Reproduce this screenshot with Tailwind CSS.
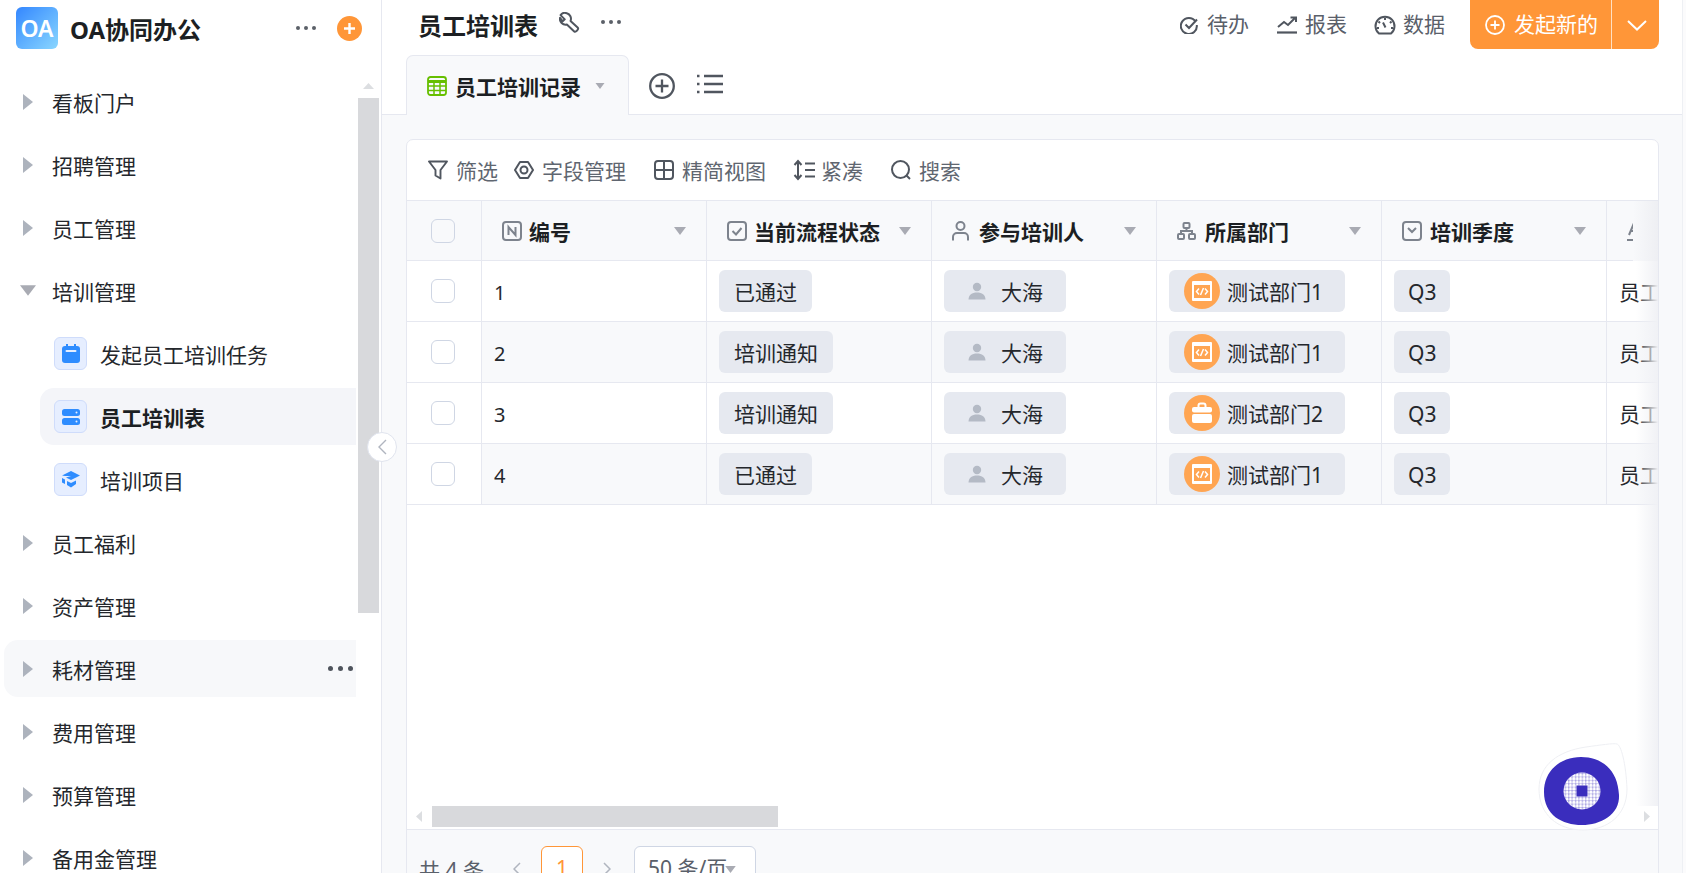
<!DOCTYPE html>
<html lang="zh-CN">

<head>
    <meta charset="UTF-8">
    <meta name="viewport" content="width=device-width, initial-scale=1.0">
    <title>OA协同办公 - 员工培训表</title>
    <script src="https://cdn.jsdelivr.net/npm/@tailwindcss/browser@4"></script>
</head>

<body class="h-screen overflow-hidden bg-white text-[21px] text-[#24272c] font-['Noto_Sans','Noto_Sans_CJK_SC',sans-serif]">
    <!-- shared icons -->
    <svg class="hidden">
        <symbol id="tri-right" viewBox="0 0 10 16"><path d="M0 0L10 8L0 16Z" fill="#adb3bd"/></symbol>
        <symbol id="tri-down" viewBox="0 0 12 8"><path d="M0 0H12L6 8Z" fill="#a9abb3"/></symbol>
        <symbol id="person" viewBox="0 0 18 18"><circle cx="9" cy="5" r="4.200" fill="#b4bac5"/><path d="M0.500 17.500c0-4.500 3.500-7 8.500-7s8.500 2.500 8.500 7Z" fill="#b4bac5"/></symbol>
        <symbol id="dept-code" viewBox="0 0 36 36">
            <circle cx="18" cy="18" r="18" fill="#ffa552"/>
            <rect x="8" y="8" width="20" height="20" rx="1" fill="#fff"/>
            <rect x="10" y="12" width="16" height="13" fill="#ffa552"/>
            <path d="M15 15.500L12.500 18.500L15 21.500M21 15.500L23.500 18.500L21 21.500M19.500 15L16.500 22" fill="none" stroke="#fff" stroke-width="1.500"/>
        </symbol>
        <symbol id="dept-bag" viewBox="0 0 36 36">
            <circle cx="18" cy="18" r="18" fill="#ffa552"/>
            <path d="M14.500 12v-1.500a2 2 0 0 1 2-2h3a2 2 0 0 1 2 2V12" fill="none" stroke="#fff" stroke-width="2"/>
            <rect x="8" y="12" width="20" height="5.500" rx="2" fill="#fff"/>
            <rect x="8" y="19" width="20" height="9" rx="2" fill="#fff"/>
        </symbol>
    </svg>

    <div class="flex h-full">
        <!-- Sidebar -->
        <aside class="relative w-[382px] shrink-0 border-r border-[#e6e8f0] flex flex-col h-full">
            <div class="h-[73px] shrink-0 flex items-start pl-4 pt-[7px]">
                <div class="w-[42px] h-[42px] rounded-[6px] bg-linear-to-br from-[#3486ff] to-[#8ad6ff] flex items-center justify-center text-white text-[23px] font-semibold">OA</div>
                <div class="ml-3 mt-[5px] text-[24px] font-bold text-[#1c1f23] w-[226px]">OA协同办公</div>
                <svg class="mt-[19px] w-[20px] h-[4px]" viewBox="0 0 20 4" fill="#5b6068"><circle cx="2" cy="2" r="2"/><circle cx="10" cy="2" r="2"/><circle cx="18" cy="2" r="2"/></svg>
                <svg class="ml-[21px] mt-[9px] w-[25px] h-[25px]" viewBox="0 0 25 25"><circle cx="12.500" cy="12.500" r="12.500" fill="#ff9638"/><path d="M12.500 7v11M7 12.500h11" stroke="#fff" stroke-width="2.400"/></svg>
            </div>
            <div class="flex-1 min-h-0 flex">
                <!-- Menu -->
                <nav class="w-[356px] pl-1 shrink-0 flex flex-col gap-[6px] overflow-hidden">
                    <div class="h-[57px] shrink-0 flex items-center pl-[19px]"><svg class="w-[10px] h-[16px]"><use href="#tri-right"/></svg><span class="ml-[19px] pt-[5px]">看板门户</span></div>
                    <div class="h-[57px] shrink-0 flex items-center pl-[19px]"><svg class="w-[10px] h-[16px]"><use href="#tri-right"/></svg><span class="ml-[19px] pt-[5px]">招聘管理</span></div>
                    <div class="h-[57px] shrink-0 flex items-center pl-[19px]"><svg class="w-[10px] h-[16px]"><use href="#tri-right"/></svg><span class="ml-[19px] pt-[5px]">员工管理</span></div>
                    <div class="h-[57px] shrink-0 flex items-center pl-[16px]"><svg class="w-[16px] h-[11px]"><use href="#tri-down"/></svg><span class="ml-[16px] pt-[5px]">培训管理</span></div>

                    <div class="h-[57px] shrink-0 flex items-center pl-[50px]">
                        <div class="w-[33px] h-[33px] rounded-[6px] bg-[#e6eeff] border border-[#cfdcfb] flex items-center justify-center">
                            <svg class="w-[18px] h-[19px]" viewBox="0 0 18 19"><path d="M4 0h2v3H4zM12 0h2v3h-2z" fill="#2e8cff"/><rect y="2" width="18" height="17" rx="3" fill="#2e8cff"/><rect x="3.500" y="6" width="11" height="2" rx="1" fill="#e6eeff"/></svg>
                        </div>
                        <span class="ml-[13px] pt-[5px]">发起员工培训任务</span>
                    </div>
                    <div class="h-[57px] shrink-0 flex items-center ml-9 pl-[14px] rounded-l-[14px] bg-[#f4f5f9]">
                        <div class="w-[33px] h-[33px] rounded-[6px] bg-[#e6eeff] border border-[#cfdcfb] flex items-center justify-center">
                            <svg class="w-[18px] h-[16px]" viewBox="0 0 18 16"><rect width="18" height="7" rx="2.500" fill="#2e8cff"/><rect y="9" width="18" height="7" rx="2.500" fill="#2e8cff"/><circle cx="14.500" cy="3.500" r="1" fill="#e6eeff"/><circle cx="14.500" cy="12.500" r="1" fill="#e6eeff"/></svg>
                        </div>
                        <span class="ml-[13px] pt-[5px] font-bold text-[#1c1f23]">员工培训表</span>
                    </div>
                    <div class="h-[57px] shrink-0 flex items-center pl-[50px]">
                        <div class="w-[33px] h-[33px] rounded-[6px] bg-[#e6eeff] border border-[#cfdcfb] flex items-center justify-center">
                            <svg class="w-[18px] h-[17px]" viewBox="0 0 18 17"><path d="M9 0L18 4.500L9 9L4 6.500L9 5L3 5L0 4.500Z" fill="#2e8cff"/><path d="M0 7L3 8.500V13L0 11.500ZM5 10L9 12L14 9.500V13L9 16.500L5 14Z" fill="#2e8cff"/></svg>
                        </div>
                        <span class="ml-[13px] pt-[5px]">培训项目</span>
                    </div>

                    <div class="h-[57px] shrink-0 flex items-center pl-[19px]"><svg class="w-[10px] h-[16px]"><use href="#tri-right"/></svg><span class="ml-[19px] pt-[5px]">员工福利</span></div>
                    <div class="h-[57px] shrink-0 flex items-center pl-[19px]"><svg class="w-[10px] h-[16px]"><use href="#tri-right"/></svg><span class="ml-[19px] pt-[5px]">资产管理</span></div>
                    <div class="h-[57px] shrink-0 flex items-center pl-[19px] rounded-l-[14px] bg-[#f7f8fa]">
                        <svg class="w-[10px] h-[16px]"><use href="#tri-right"/></svg><span class="ml-[19px] pt-[5px] flex-1">耗材管理</span>
                        <svg class="mr-[3px] w-[25px] h-[5px]" viewBox="0 0 25 5" fill="#4f545c"><circle cx="2.500" cy="2.500" r="2.500"/><circle cx="12.500" cy="2.500" r="2.500"/><circle cx="22.500" cy="2.500" r="2.500"/></svg>
                    </div>
                    <div class="h-[57px] shrink-0 flex items-center pl-[19px]"><svg class="w-[10px] h-[16px]"><use href="#tri-right"/></svg><span class="ml-[19px] pt-[5px]">费用管理</span></div>
                    <div class="h-[57px] shrink-0 flex items-center pl-[19px]"><svg class="w-[10px] h-[16px]"><use href="#tri-right"/></svg><span class="ml-[19px] pt-[5px]">预算管理</span></div>
                    <div class="h-[57px] shrink-0 flex items-center pl-[19px]"><svg class="w-[10px] h-[16px]"><use href="#tri-right"/></svg><span class="ml-[19px] pt-[5px]">备用金管理</span></div>
                </nav>
                <!-- Menu scrollbar -->
                <div class="w-[21px] ml-[2px] shrink-0 flex flex-col items-center">
                    <svg class="mt-[10px] w-[11px] h-[6px]" viewBox="0 0 11 6"><path d="M0 6L5.500 0L11 6Z" fill="#dcdee1"/></svg>
                    <div class="mt-[9px] w-full h-[515px] bg-[#d8d9dc]"></div>
                </div>
            </div>
            <!-- Collapse handle -->
            <button class="absolute left-[367px] top-[432px] w-[30px] h-[30px] rounded-full bg-white border border-[#e0e4ee] flex items-center justify-center">
                <svg class="w-[9px] h-[16px]" viewBox="0 0 9 16" fill="none" stroke="#b0b5bf" stroke-width="1.400"><path d="M8 1L1 8L8 15"/></svg>
            </button>
        </aside>

        <!-- Main -->
        <main class="w-[1301px] shrink-0 h-full border-r border-[#eef0f4] flex flex-col">
            <!-- Title bar -->
            <div class="h-[55px] shrink-0 flex items-start">
                <h1 class="ml-[36px] mt-[8px] text-[24px] font-bold text-[#1c1f23]">员工培训表</h1>
                <svg class="ml-[21px] mt-[12px] w-[21px] h-[21px]" viewBox="0 0 20 20" fill="none" stroke="#50565f" stroke-width="1.900" stroke-linejoin="round"><path d="M7.500 1.200a5 5 0 0 0-6 1.800L5.500 7l-2 1.800L1 5.500a5.500 5.500 0 0 0 6.500 6.500l7 6.500c1.500 1.200 4.500-2 3.500-3.500l-7-6.500a5.500 5.500 0 0 0-3.500-7.300Z"/></svg>
                <svg class="ml-[21px] mt-[20px] w-[20px] h-[4px]" viewBox="0 0 20 4" fill="#5b6068"><circle cx="2" cy="2" r="2"/><circle cx="10" cy="2" r="2"/><circle cx="18" cy="2" r="2"/></svg>

                <div class="ml-auto flex items-center h-[49px] text-[#5a606a]">
                    <svg class="w-[18px] h-[18px]" viewBox="0 0 18 18" fill="none" stroke="#50565f" stroke-width="2"><path d="M15.500 5.500A8 8 0 1 0 16.800 9"/><path d="M5.500 8.500L9 12L17 3.500"/></svg>
                    <span class="ml-[9px]">待办</span>
                    <svg class="ml-[28px] w-[20px] h-[18px]" viewBox="0 0 20 18" fill="none" stroke="#50565f" stroke-width="2"><path d="M1 11L7 6L11 9L18 2M13.500 1.500H19V6"/><path d="M0 16.500H20" stroke-width="2.200"/></svg>
                    <span class="ml-[8px]">报表</span>
                    <svg class="ml-[27px] w-[22px] h-[20px]" viewBox="0 0 22 20" fill="none" stroke="#50565f" stroke-width="2"><path d="M5 18.500A9.500 9.500 0 1 1 17 18.500Z" stroke-linejoin="round"/><path d="M11 3v2M4.500 6.500L6 8M17.500 6.500L16 8M3 13h2M19 13h-2M9 7.500L11.500 12.500" /></svg>
                    <span class="ml-[7px]">数据</span>
                    <div class="ml-[25px] w-[189px] h-[49px] rounded-b-[8px] bg-[#ff9638] flex items-center text-white">
                        <svg class="ml-[15px] w-[20px] h-[20px]" viewBox="0 0 20 20" fill="none" stroke="#fff" stroke-width="1.800"><circle cx="10" cy="10" r="9"/><path d="M10 5.500v9M5.500 10h9"/></svg>
                        <span class="ml-[9px] w-[97px]">发起新的</span>
                        <div class="w-px h-full bg-white/70"></div>
                        <svg class="ml-[14px] w-[22px] h-[12px]" viewBox="0 0 22 12" fill="none" stroke="#fff" stroke-width="2"><path d="M2 2L11 10.500L20 2"/></svg>
                    </div>
                </div>
                <div class="w-[23px] shrink-0"></div>
            </div>

            <!-- View tabs -->
            <div class="h-[60px] shrink-0 border-b border-[#e6e8f0] flex items-start">
                <div class="ml-6 w-[223px] h-[60px] rounded-t-[7px] border border-b-0 border-[#e6e8f0] bg-[#f8f9fb] flex items-center">
                    <svg class="ml-[20px] w-[20px] h-[20px]" viewBox="0 0 20 20" fill="none" stroke="#66bf00" stroke-width="1.800"><rect x="1" y="1" width="18" height="18" rx="2.500"/><path d="M1 5.500H19" stroke-width="3"/><path d="M1 10H19M1 14.500H19M7 6V19M13 6V19" stroke-width="1.500"/></svg>
                    <span class="ml-[8px] pt-[4px] font-bold text-[#1c1f23]">员工培训记录</span>
                    <svg class="ml-[14px] w-[10px] h-[6px]"><use href="#tri-down"/></svg>
                </div>
                <svg class="ml-[20px] mt-[18px] w-[26px] h-[26px]" viewBox="0 0 26 26" fill="none" stroke="#50565f" stroke-width="2.300"><circle cx="13" cy="13" r="11.800"/><path d="M13 6.500v13M6.500 13h13"/></svg>
                <svg class="ml-[22px] mt-[19px] w-[26px] h-[20px]" viewBox="0 0 26 20" fill="none" stroke="#50565f" stroke-width="2.500"><path d="M7 2H26M7 10H26M7 18H26"/><path d="M0 2h2.500M0 10h2.500M0 18h2.500"/></svg>
            </div>

            <!-- Content -->
            <div class="flex-1 min-h-0 overflow-hidden bg-[#f8f9fb] pt-6 pl-6 pr-[23px]">
                <div class="relative h-[760px] rounded-t-[7px] border border-[#e6e8f0] bg-white flex flex-col">
                    <!-- Toolbar -->
                    <div class="h-[61px] shrink-0 border-b border-[#e6e8f0] flex items-center text-[#5f6670]">
                        <svg class="ml-[21px] w-[20px] h-[20px]" viewBox="0 0 20 20" fill="none" stroke="#50565f" stroke-width="1.900" stroke-linejoin="round"><path d="M1 1.500H19L12.500 10V18.500L7.500 15.500V10Z"/></svg>
                        <span class="ml-[8px] pt-[4px]">筛选</span>
                        <svg class="ml-[16px] w-[20px] h-[20px]" viewBox="0 0 20 20" fill="none" stroke="#50565f" stroke-width="2" stroke-linejoin="round"><path d="M6 2H14L19 10L14 18H6L1 10Z"/><circle cx="10" cy="10" r="3.500"/></svg>
                        <span class="ml-[8px] pt-[4px]">字段管理</span>
                        <svg class="ml-[28px] w-[20px] h-[20px]" viewBox="0 0 20 20" fill="none" stroke="#50565f" stroke-width="2"><rect x="1" y="1" width="18" height="18" rx="3"/><path d="M10 1V19M1 10H19"/></svg>
                        <span class="ml-[8px] pt-[4px]">精简视图</span>
                        <svg class="ml-[27px] w-[22px] h-[22px]" viewBox="0 0 22 22" fill="none" stroke="#50565f" stroke-width="2"><path d="M5 2V20M1.500 6L5 2L8.500 6M1.500 16L5 20L8.500 16"/><path d="M12 4.500H22M12 11H22M12 17.500H22"/></svg>
                        <span class="ml-[6px] pt-[4px]">紧凑</span>
                        <svg class="ml-[28px] w-[20px] h-[20px]" viewBox="0 0 20 20" fill="none" stroke="#50565f" stroke-width="2"><circle cx="9.500" cy="9.500" r="8.500"/><path d="M15.500 15.500L19 19"/></svg>
                        <span class="ml-[8px] pt-[4px]">搜索</span>
                    </div>

                    <!-- Table -->
                    <div class="relative h-[605px] shrink-0 overflow-hidden">
                        <!-- Head -->
                        <div class="flex h-[60px] bg-[#f8f9fb] border-b border-[#e6e8f0] font-bold text-[#1c1f23]">
                            <div class="w-[75px] shrink-0 border-r border-[#e6e8f0] flex items-center justify-center pr-[3px]"><div class="w-[24px] h-[24px] rounded-[6px] border border-[#cfd6e4] bg-[#f8f9fb]"></div></div>
                            <div class="w-[225px] shrink-0 border-r border-[#e6e8f0] flex items-center pl-[20px] pr-[20px]">
                                <svg class="w-[20px] h-[20px]" viewBox="0 0 20 20" fill="none" stroke="#7d838d" stroke-width="2"><rect x="1" y="1" width="18" height="18" rx="3"/><path d="M6.500 14V6L13.500 14V6"/></svg>
                                <span class="ml-[7px] pt-[4px] flex-1">编号</span><svg class="w-[12px] h-[8px]"><use href="#tri-down"/></svg>
                            </div>
                            <div class="w-[225px] shrink-0 border-r border-[#e6e8f0] flex items-center pl-[20px] pr-[20px]">
                                <svg class="w-[20px] h-[20px]" viewBox="0 0 20 20" fill="none" stroke="#7d838d" stroke-width="2"><rect x="1" y="1" width="18" height="18" rx="3"/><path d="M5.500 10L9 13.500L14.500 7"/></svg>
                                <span class="ml-[7px] pt-[4px] flex-1">当前流程状态</span><svg class="w-[12px] h-[8px]"><use href="#tri-down"/></svg>
                            </div>
                            <div class="w-[225px] shrink-0 border-r border-[#e6e8f0] flex items-center pl-[20px] pr-[20px]">
                                <svg class="w-[17px] h-[20px]" viewBox="0 0 17 20" fill="none" stroke="#7d838d" stroke-width="2"><circle cx="8.500" cy="5" r="4"/><path d="M1 19.500V16a4 4 0 0 1 4-4h7a4 4 0 0 1 4 4v3.500"/></svg>
                                <span class="ml-[10px] pt-[4px] flex-1">参与培训人</span><svg class="w-[12px] h-[8px]"><use href="#tri-down"/></svg>
                            </div>
                            <div class="w-[225px] shrink-0 border-r border-[#e6e8f0] flex items-center pl-[20px] pr-[20px]">
                                <svg class="w-[19px] h-[18px]" viewBox="0 0 19 18" fill="none" stroke="#7d838d" stroke-width="2"><rect x="6.500" y="1" width="6" height="5" rx="1"/><rect x="1" y="12" width="6" height="5" rx="1"/><rect x="12" y="12" width="6" height="5" rx="1"/><path d="M9.500 6V9M4 12V9H15V12"/></svg>
                                <span class="ml-[9px] pt-[4px] flex-1">所属部门</span><svg class="w-[12px] h-[8px]"><use href="#tri-down"/></svg>
                            </div>
                            <div class="w-[225px] shrink-0 border-r border-[#e6e8f0] flex items-center pl-[20px] pr-[20px]">
                                <svg class="w-[20px] h-[20px]" viewBox="0 0 20 20" fill="none" stroke="#7d838d" stroke-width="2"><rect x="1" y="1" width="18" height="18" rx="3"/><path d="M6 7L10 11L14 7"/></svg>
                                <span class="ml-[8px] pt-[4px] flex-1">培训季度</span><svg class="w-[12px] h-[8px]"><use href="#tri-down"/></svg>
                            </div>
                            <div class="w-[225px] shrink-0 flex items-center pl-[20px]">
                                <svg class="w-[20px] h-[20px]" viewBox="0 0 20 20" fill="none" stroke="#7d838d" stroke-width="2"><path d="M2 14L7 2L12 14M4 10H10M0 19H20"/></svg>
                            </div>
                        </div>

                        <!-- Row 1 -->
                        <div class="flex h-[61px] bg-white border-b border-[#e6e8f0]">
                            <div class="w-[75px] shrink-0 border-r border-[#e6e8f0] flex items-center justify-center pr-[3px]"><div class="w-[24px] h-[24px] rounded-[6px] border border-[#cfd6e4] bg-white"></div></div>
                            <div class="w-[225px] shrink-0 border-r border-[#e6e8f0] flex items-center pl-[12px] pt-[4px] text-[20px]">1</div>
                            <div class="w-[225px] shrink-0 border-r border-[#e6e8f0] flex items-center pl-[12px]"><span class="h-[42px] px-[15px] pt-[4px] rounded-[6px] bg-[#e6e9f0] flex items-center">已通过</span></div>
                            <div class="w-[225px] shrink-0 border-r border-[#e6e8f0] flex items-center pl-[12px]"><span class="h-[42px] w-[122px] rounded-[6px] bg-[#e6e9f0] flex items-center pl-[24px]"><svg class="w-[18px] h-[18px]"><use href="#person"/></svg><span class="ml-[15px] pt-[4px]">大海</span></span></div>
                            <div class="w-[225px] shrink-0 border-r border-[#e6e8f0] flex items-center pl-[12px]"><span class="h-[42px] w-[176px] rounded-[6px] bg-[#e6e9f0] flex items-center pl-[15px]"><svg class="w-[36px] h-[36px] shrink-0"><use href="#dept-code"/></svg><span class="ml-[7px] pt-[4px]">测试部门1</span></span></div>
                            <div class="w-[225px] shrink-0 border-r border-[#e6e8f0] flex items-center pl-[12px]"><span class="h-[42px] px-[14px] pt-[4px] rounded-[6px] bg-[#e6e9f0] flex items-center">Q3</span></div>
                            <div class="w-[225px] shrink-0 flex items-center pl-[12px] pt-[4px]">员工管理</div>
                        </div>
                        <!-- Row 2 -->
                        <div class="flex h-[61px] bg-[#f8f9fb] border-b border-[#e6e8f0]">
                            <div class="w-[75px] shrink-0 border-r border-[#e6e8f0] bg-white flex items-center justify-center pr-[3px]"><div class="w-[24px] h-[24px] rounded-[6px] border border-[#cfd6e4] bg-white"></div></div>
                            <div class="w-[225px] shrink-0 border-r border-[#e6e8f0] flex items-center pl-[12px] pt-[4px] text-[20px]">2</div>
                            <div class="w-[225px] shrink-0 border-r border-[#e6e8f0] flex items-center pl-[12px]"><span class="h-[42px] px-[15px] pt-[4px] rounded-[6px] bg-[#e6e9f0] flex items-center">培训通知</span></div>
                            <div class="w-[225px] shrink-0 border-r border-[#e6e8f0] flex items-center pl-[12px]"><span class="h-[42px] w-[122px] rounded-[6px] bg-[#e6e9f0] flex items-center pl-[24px]"><svg class="w-[18px] h-[18px]"><use href="#person"/></svg><span class="ml-[15px] pt-[4px]">大海</span></span></div>
                            <div class="w-[225px] shrink-0 border-r border-[#e6e8f0] flex items-center pl-[12px]"><span class="h-[42px] w-[176px] rounded-[6px] bg-[#e6e9f0] flex items-center pl-[15px]"><svg class="w-[36px] h-[36px] shrink-0"><use href="#dept-code"/></svg><span class="ml-[7px] pt-[4px]">测试部门1</span></span></div>
                            <div class="w-[225px] shrink-0 border-r border-[#e6e8f0] flex items-center pl-[12px]"><span class="h-[42px] px-[14px] pt-[4px] rounded-[6px] bg-[#e6e9f0] flex items-center">Q3</span></div>
                            <div class="w-[225px] shrink-0 flex items-center pl-[12px] pt-[4px]">员工管理</div>
                        </div>
                        <!-- Row 3 -->
                        <div class="flex h-[61px] bg-white border-b border-[#e6e8f0]">
                            <div class="w-[75px] shrink-0 border-r border-[#e6e8f0] flex items-center justify-center pr-[3px]"><div class="w-[24px] h-[24px] rounded-[6px] border border-[#cfd6e4] bg-white"></div></div>
                            <div class="w-[225px] shrink-0 border-r border-[#e6e8f0] flex items-center pl-[12px] pt-[4px] text-[20px]">3</div>
                            <div class="w-[225px] shrink-0 border-r border-[#e6e8f0] flex items-center pl-[12px]"><span class="h-[42px] px-[15px] pt-[4px] rounded-[6px] bg-[#e6e9f0] flex items-center">培训通知</span></div>
                            <div class="w-[225px] shrink-0 border-r border-[#e6e8f0] flex items-center pl-[12px]"><span class="h-[42px] w-[122px] rounded-[6px] bg-[#e6e9f0] flex items-center pl-[24px]"><svg class="w-[18px] h-[18px]"><use href="#person"/></svg><span class="ml-[15px] pt-[4px]">大海</span></span></div>
                            <div class="w-[225px] shrink-0 border-r border-[#e6e8f0] flex items-center pl-[12px]"><span class="h-[42px] w-[176px] rounded-[6px] bg-[#e6e9f0] flex items-center pl-[15px]"><svg class="w-[36px] h-[36px] shrink-0"><use href="#dept-bag"/></svg><span class="ml-[7px] pt-[4px]">测试部门2</span></span></div>
                            <div class="w-[225px] shrink-0 border-r border-[#e6e8f0] flex items-center pl-[12px]"><span class="h-[42px] px-[14px] pt-[4px] rounded-[6px] bg-[#e6e9f0] flex items-center">Q3</span></div>
                            <div class="w-[225px] shrink-0 flex items-center pl-[12px] pt-[4px]">员工管理</div>
                        </div>
                        <!-- Row 4 -->
                        <div class="flex h-[61px] bg-[#f8f9fb] border-b border-[#e6e8f0]">
                            <div class="w-[75px] shrink-0 border-r border-[#e6e8f0] bg-white flex items-center justify-center pr-[3px]"><div class="w-[24px] h-[24px] rounded-[6px] border border-[#cfd6e4] bg-white"></div></div>
                            <div class="w-[225px] shrink-0 border-r border-[#e6e8f0] flex items-center pl-[12px] pt-[4px] text-[20px]">4</div>
                            <div class="w-[225px] shrink-0 border-r border-[#e6e8f0] flex items-center pl-[12px]"><span class="h-[42px] px-[15px] pt-[4px] rounded-[6px] bg-[#e6e9f0] flex items-center">已通过</span></div>
                            <div class="w-[225px] shrink-0 border-r border-[#e6e8f0] flex items-center pl-[12px]"><span class="h-[42px] w-[122px] rounded-[6px] bg-[#e6e9f0] flex items-center pl-[24px]"><svg class="w-[18px] h-[18px]"><use href="#person"/></svg><span class="ml-[15px] pt-[4px]">大海</span></span></div>
                            <div class="w-[225px] shrink-0 border-r border-[#e6e8f0] flex items-center pl-[12px]"><span class="h-[42px] w-[176px] rounded-[6px] bg-[#e6e9f0] flex items-center pl-[15px]"><svg class="w-[36px] h-[36px] shrink-0"><use href="#dept-code"/></svg><span class="ml-[7px] pt-[4px]">测试部门1</span></span></div>
                            <div class="w-[225px] shrink-0 border-r border-[#e6e8f0] flex items-center pl-[12px]"><span class="h-[42px] px-[14px] pt-[4px] rounded-[6px] bg-[#e6e9f0] flex items-center">Q3</span></div>
                            <div class="w-[225px] shrink-0 flex items-center pl-[12px] pt-[4px]">员工管理</div>
                        </div>

                        <!-- Fixed column shadow -->
                        <div class="absolute right-0 top-0 w-[25px] h-[60px] bg-linear-to-r from-[#f8f9fb] to-[#eeeff3]"></div>
                        <div class="absolute right-0 top-[60px] bottom-0 w-[22px] bg-linear-to-r from-transparent to-[#f0f1f5]"></div>
                    </div>

                    <!-- Horizontal scrollbar -->
                    <div class="h-[23px] shrink-0 flex items-start relative">
                        <svg class="ml-[9px] mt-[5px] w-[6px] h-[11px]" viewBox="0 0 6 11"><path d="M6 0V11L0 5.500Z" fill="#dcdee1"/></svg>
                        <div class="ml-[10px] w-[346px] h-[21px] bg-[#d8d9dc]"></div>
                        <svg class="ml-auto mr-[8px] mt-[5px] w-[6px] h-[11px]" viewBox="0 0 6 11"><path d="M0 0V11L6 5.500Z" fill="#dcdee1"/></svg>
                    </div>

                    <!-- Pagination -->
                    <div class="flex-1 border-t border-[#e6e8f0] bg-[#f8f9fb] flex items-start pt-4 text-[#5a606a]">
                        <span class="ml-[12px] mt-[9px] w-[66px] whitespace-nowrap">共 4 条</span>
                        <svg class="ml-[28px] mt-[16px] w-[8px] h-[14px]" viewBox="0 0 8 14" fill="none" stroke="#b0b5bf" stroke-width="1.500"><path d="M7 1L1 7L7 13"/></svg>
                        <div class="ml-[20px] w-[42px] h-[42px] rounded-[6px] border border-[#ff9638] bg-white flex items-center justify-center text-[#ff9638] pt-[4px]">1</div>
                        <svg class="ml-[20px] mt-[16px] w-[8px] h-[14px]" viewBox="0 0 8 14" fill="none" stroke="#b0b5bf" stroke-width="1.500"><path d="M1 1L7 7L1 13"/></svg>
                        <div class="ml-[23px] w-[122px] h-[42px] rounded-[6px] border border-[#cfd6e4] bg-white flex items-center pl-[13px]">
                            <span class="whitespace-nowrap pt-[4px]">50 条/页</span><svg class="ml-[-3px] mt-[4px] w-[13px] h-[7px]"><use href="#tri-down"/></svg>
                        </div>
                    </div>
                </div>
            </div>
        </main>
        <div class="flex-1 bg-[#fbfbfc]"></div>
    </div>

    <!-- Floating assistant -->
    <svg class="fixed left-[1538px] top-[743px] w-[90px] h-[88px]" viewBox="0 0 90 88">
        <defs>
            <pattern id="dots" width="3.400" height="3.400" patternUnits="userSpaceOnUse" x="0.300" y="0.300"><rect x="0.100" y="0.100" width="3.100" height="3.100" rx="0.500" fill="#fff"/></pattern>
        </defs>
        <path d="M1 46C1 22 20 8 48 4C62 2 76 0 79 1C83 2 88 20 89 46C89 72 70 87 45 87C20 87 1 72 1 46Z" fill="#fff" stroke="#eeeff3"/>
        <path d="M6 49C6 28 22 14 43 14C63 14 80 26 81 52C82 72 62 82 44 82C24 82 6 72 6 49Z" fill="#3a2dbd"/>
        <circle cx="44" cy="48" r="18.500" fill="url(#dots)"/>
        <rect x="38.500" y="42.500" width="11" height="11" fill="#3a2dbd"/>
    </svg>
</body>

</html>
